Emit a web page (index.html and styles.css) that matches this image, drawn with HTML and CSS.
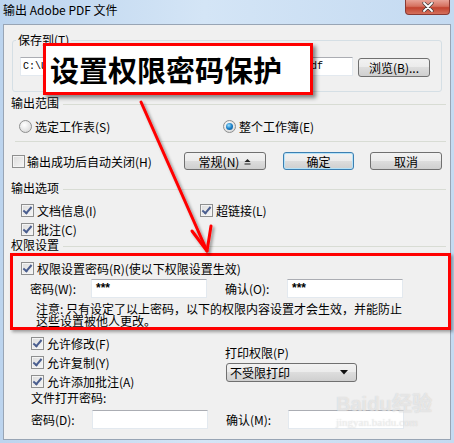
FILE: index.html
```html
<!DOCTYPE html>
<html lang="zh-CN">
<head>
    <meta charset="UTF-8">
    <title>输出 Adobe PDF 文件</title>
    <link rel="stylesheet" href="styles.css">
</head>
<body>
<div class="window">
    <div class="titlebar">
        <span class="title">输出 Adobe PDF 文件</span>
        <span class="close-btn">
            <svg viewBox="0 0 12 10" width="12" height="10">
                <path d="M2 1 L10 9 M10 1 L2 9" stroke="#3a3a3a" stroke-width="3.2" stroke-linecap="round" />
                <path d="M2 1 L10 9 M10 1 L2 9" stroke="#fff" stroke-width="1.8" stroke-linecap="round" />
            </svg>
        </span>
    </div>

    <div class="client">
        <!-- Speicherort -->
        <fieldset class="group">
            <legend>保存到(T)</legend>
            <div class="path-row">
                <div class="textbox path">C:\Users\Administrator\Desktop\Book1_report_13.pdf</div>
                <div class="btn browse">浏览(B)...</div>
            </div>
        </fieldset>

        <div class="section sec-range"><span>输出范围</span></div>
        <div class="radios">
            <label class="opt radio-first"><span class="radio"></span>选定工作表(S)</label>
            <label class="opt"><span class="radio on"></span>整个工作簿(E)</label>
        </div>
        <div class="sep"></div>

        <div class="action-row">
            <label class="opt autoclose"><span class="check"></span>输出成功后自动关闭(H)</label>
            <div class="btn general">常规(N)
                <svg class="up-glyph" viewBox="0 0 7 7" width="7" height="7">
                    <path d="M0.5 4 L3.5 1 L6.5 4 Z" fill="#222" />
                    <path d="M0.5 6 H6.5" stroke="#222" stroke-width="1" />
                </svg>
            </div>
            <div class="btn ok">确定</div>
            <div class="btn cancel">取消</div>
        </div>

        <div class="section sec-output"><span>输出选项</span></div>
        <div class="opt-grid row-a">
            <label class="opt col-1"><span class="check on"></span>文档信息(I)</label>
            <label class="opt"><span class="check on"></span>超链接(L)</label>
        </div>
        <div class="opt-grid row-b">
            <label class="opt col-1"><span class="check on"></span>批注(C)</label>
        </div>

        <div class="section sec-perm"><span>权限设置</span></div>
        <div class="perm-check">
            <label class="opt"><span class="check on"></span>权限设置密码(R)(使以下权限设置生效)</label>
        </div>
        <div class="pw-row pw-perm">
            <span class="pw-label">密码(W):</span>
            <div class="textbox pw">***</div>
            <span class="pw-label second">确认(O):</span>
            <div class="textbox pw">***</div>
        </div>
        <div class="note">注意: 只有设定了以上密码，以下的权限内容设置才会生效，并能防止<br>这些设置被他人更改。</div>

        <div class="lower">
            <div class="allow-list">
                <label class="opt"><span class="check on"></span>允许修改(F)</label>
                <label class="opt"><span class="check on"></span>允许复制(Y)</label>
                <label class="opt"><span class="check on"></span>允许添加批注(A)</label>
            </div>
            <div class="print-col">
                <div class="print-label">打印权限(P)</div>
                <div class="select">
                    <span>不受限打印</span>
                    <svg viewBox="0 0 8 5" width="8" height="5"><path d="M0 0 H8 L4 4.5 Z" fill="#111" /></svg>
                </div>
            </div>
        </div>

        <div class="open-label">文件打开密码:</div>
        <div class="pw-row pw-open">
            <span class="pw-label">密码(D):</span>
            <div class="textbox pw"></div>
            <span class="pw-label second">确认(M):</span>
            <div class="textbox pw"></div>
        </div>
    </div>

    <!-- Anmerkungen -->
    <div class="callout">设置权限密码保护</div>
    <div class="highlight"></div>
    <svg class="arrow" viewBox="0 0 454 443" width="454" height="443">
        <defs>
            <filter id="shadow" x="-20%" y="-20%" width="140%" height="140%">
                <feDropShadow dx="2" dy="2" stdDeviation="1.5" flood-color="#000" flood-opacity="0.4" />
            </filter>
        </defs>
        <g filter="url(#shadow)" stroke="#f00" stroke-width="3" stroke-linecap="round" fill="none">
            <path d="M141 102 L207 251" />
            <path d="M192 231 L207 251 L211 226" stroke-linejoin="round" />
        </g>
    </svg>
    <div class="watermark">
        <div class="wm-logo">Bai<span class="paw">du</span>经验</div>
        <div class="wm-url">jingyan.baidu.com</div>
    </div>
</div>
</body>
</html>
```

FILE: styles.css
```css
body {
    margin: 0;
    font-family: "Noto Sans CJK SC", "Liberation Sans", sans-serif;
    font-size: 12px;
    color: #000;
}

.window {
    position: relative;
    width: 454px;
    height: 443px;
    display: flex;
    flex-direction: column;
    background: linear-gradient(to right, #bcd4ee, #d4e5f6 45%, #c4daf1);
    overflow: hidden;
}

.titlebar {
    height: 24px;
    flex: none;
    position: relative;
}

.title {
    display: block;
    margin: 2px 0 0 3px;
    line-height: 16px;
}

.close-btn {
    position: absolute;
    top: 0;
    right: 4px;
    width: 45px;
    height: 15px;
    display: flex;
    align-items: center;
    justify-content: center;
    border: 1px solid #8a3a33;
    border-top: none;
    border-radius: 0 0 4px 4px;
    box-sizing: border-box;
    background: linear-gradient(#e8a397, #d5715f 45%, #c2432f 55%, #d4705c);
}

.client {
    flex: 1;
    margin: 0 3px 3px 3px;
    padding: 0 4px 0 7px;
    background: #f0f0f0;
    border: 1px solid #98a5b5;
}

/* Gruppe */
.group {
    margin: 7px 4px 0 1px;
    padding: 0 10px 14px 7px;
    border: 1px solid #d5dfe5;
    border-radius: 3px;
    min-width: 0;
}

.group legend {
    line-height: 16px;
    padding: 0 2px;
    margin-left: -4px;
}

.path-row {
    display: flex;
    gap: 5px;
    margin-top: 9px;
}

.textbox {
    box-sizing: border-box;
    height: 19px;
    background: #fff;
    border: 1px solid #e3e9ef;
    border-top-color: #abadb3;
    line-height: 17px;
    padding: 0 3px;
    white-space: nowrap;
    overflow: hidden;
}

.path {
    width: 333px;
    padding-left: 2px;
    font-family: "Liberation Mono", monospace;
    font-size: 10px;
}

.btn {
    box-sizing: border-box;
    height: 18px;
    display: flex;
    align-items: center;
    justify-content: center;
    gap: 5px;
    border: 1px solid #707070;
    border-radius: 3px;
    background: linear-gradient(#f2f2f2, #ebebeb 50%, #dddddd 50%, #cfcfcf);
}

.browse {
    width: 72px;
    height: 19px;
    margin-top: 1px;
}

/* Abschnitte */
.section {
    display: flex;
    align-items: center;
    height: 16px;
    line-height: 16px;
}

.section::after {
    content: "";
    flex: 1;
    margin-left: 4px;
    margin-top: 2px;
    border-top: 1px solid #d8dcd4;
}

.sec-range { margin-top: 3px; }
.sec-output { margin-top: 10px; }
.sec-perm { margin-top: 0; }

.opt {
    display: flex;
    align-items: center;
    gap: 3px;
    height: 16px;
    white-space: nowrap;
}

.radios {
    display: flex;
    margin-top: 7px;
    padding-left: 8px;
}

.radio-first { width: 204px; }

.radio {
    width: 13px;
    height: 13px;
    box-sizing: border-box;
    border-radius: 50%;
    border: 1px solid #8e8f8f;
    background: radial-gradient(circle at 40% 35%, #fff, #e4e4e4 60%, #cfcfcf);
    position: relative;
}

.radio.on::after {
    content: "";
    position: absolute;
    left: 2px;
    top: 2px;
    width: 7px;
    height: 7px;
    border-radius: 50%;
    background: radial-gradient(circle at 40% 35%, #9fe2ff, #1a80c8 50%, #0b4f8a);
}

.sep {
    margin: 7px 0 0 4px;
    border-top: 1px solid #d8dcd4;
}

.check {
    width: 13px;
    height: 13px;
    box-sizing: border-box;
    border: 1px solid #8e8f8f;
    background: linear-gradient(135deg, #dcdcdc, #f6f6f6);
    box-shadow: inset 0 0 0 1px #f4f4f4;
    position: relative;
}

.check.on::after {
    content: "";
    position: absolute;
    left: 3px;
    top: 0;
    width: 3px;
    height: 7px;
    border: solid #4a5e8f;
    border-width: 0 2px 2px 0;
    transform: rotate(40deg);
}

.action-row {
    display: flex;
    align-items: center;
    height: 18px;
    margin-top: 10px;
}

.autoclose {
    width: 172px;
    margin-left: 1px;
    gap: 2px;
}

.general { width: 82px; }
.ok {
    width: 71px;
    margin-left: 17px;
    border-color: #3c7fb1;
    box-shadow: inset 0 0 0 1px #b5e2f8;
}
.cancel { width: 72px; margin-left: 16px; }

.up-glyph { margin-top: 1px; }

.opt-grid {
    display: flex;
    padding-left: 10px;
}

.row-a { margin-top: 6px; }
.row-b { margin-top: 3px; }
.col-1 { width: 179px; }

/* Rechte */
.perm-check {
    margin-top: 7px;
    padding-left: 10px;
}

.pw-row {
    display: flex;
    align-items: center;
    height: 19px;
}

.pw-perm {
    margin-top: 3px;
    padding-left: 19px;
}

.pw-label { width: 61px; }
.pw-label.second {
    width: 62px;
    margin-left: 18px;
}

.pw {
    width: 116px;
    font-family: "Liberation Sans", sans-serif;
    font-weight: bold;
    font-size: 12px;
    padding-left: 4px;
}

.note {
    margin-top: 5px;
    padding-left: 25px;
    line-height: 12px;
}

.lower {
    display: flex;
    height: 56px;
    margin-top: 7px;
    padding-left: 20px;
}

.allow-list {
    width: 194px;
}

.allow-list .opt {
    height: 19px;
}

.print-label {
    margin-top: 11px;
    line-height: 16px;
}

.select {
    box-sizing: border-box;
    width: 131px;
    height: 19px;
    margin: 2px 0 0 1px;
    padding: 0 8px 0 3px;
    display: flex;
    align-items: center;
    justify-content: space-between;
    border: 1px solid #707070;
    border-radius: 3px;
    background: linear-gradient(#f2f2f2, #ebebeb 50%, #dddddd 50%, #cfcfcf);
}

.open-label {
    line-height: 16px;
    padding-left: 20px;
}

.pw-open {
    margin-top: 4px;
    padding-left: 20px;
}

/* Anmerkungen */
.callout {
    position: absolute;
    left: 43px;
    top: 43px;
    width: 270px;
    height: 52px;
    box-sizing: border-box;
    border: 3px solid #f00;
    background: #fff;
    box-shadow: 3px 3px 4px rgba(0, 0, 0, 0.45);
    padding-left: 4px;
    font-size: 29px;
    font-weight: bold;
    line-height: 46px;
    white-space: nowrap;
}

.highlight {
    position: absolute;
    left: 10px;
    top: 253px;
    width: 441px;
    height: 77px;
    box-sizing: border-box;
    border: 3px solid #f00;
    box-shadow: 2px 2px 3px rgba(0, 0, 0, 0.35);
}

.arrow {
    position: absolute;
    left: 0;
    top: 0;
    pointer-events: none;
}

.watermark {
    position: absolute;
    left: 336px;
    top: 392px;
    color: rgba(255, 255, 255, 0.55);
    text-shadow: 0 0 1px rgba(120, 120, 120, 0.35);
    pointer-events: none;
}

.wm-logo {
    font-family: "Liberation Sans", sans-serif;
    font-size: 20px;
    font-weight: bold;
    line-height: 24px;
}

.wm-url {
    font-family: "Liberation Serif", serif;
    font-size: 11px;
    line-height: 12px;
}
```
